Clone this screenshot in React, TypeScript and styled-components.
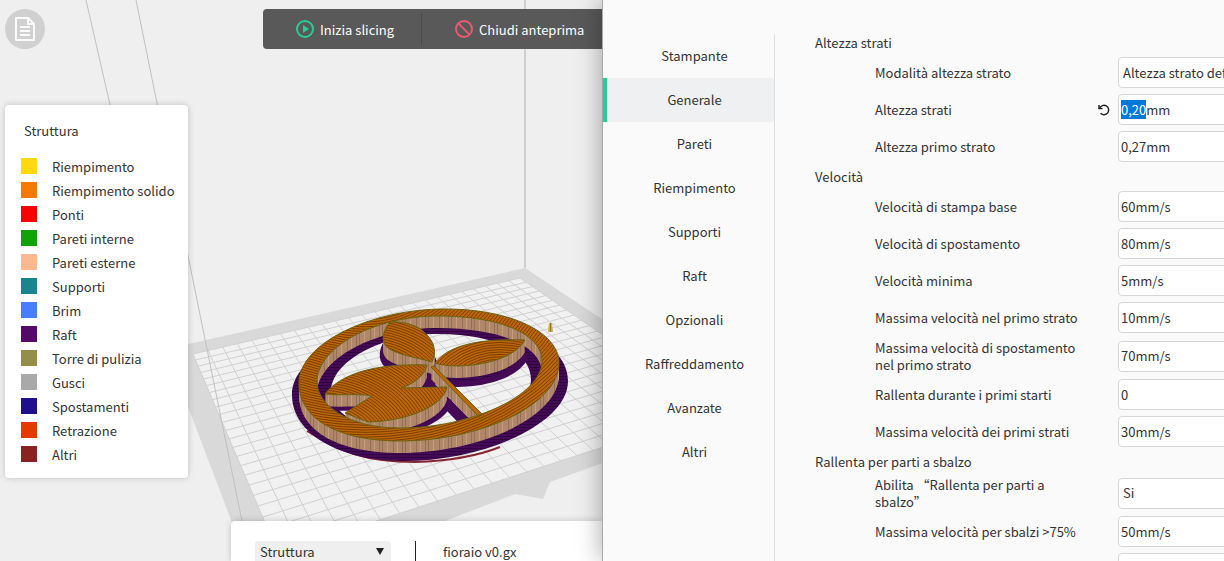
import React, { useEffect, useRef } from 'react';
import styled, { createGlobalStyle } from 'styled-components';

const GlobalStyle = createGlobalStyle`
  *, *::before, *::after { box-sizing: border-box; }
  body { margin: 0; background: #efefef; }
  body, button, input, select {
    font-family: 'Noto Sans CJK SC', 'Noto Sans', sans-serif;
    font-size: 13px;
    line-height: 17px;
    color: #333;
  }
  ::selection { background: #0078d7; color: #fff; }
`;

const Shell = styled.main`
  display: grid;
  grid-template-columns: minmax(0, 1fr) 622px;
  grid-template-rows: minmax(0, 1fr);
  height: 100vh;
  overflow: hidden;
`;

const Viewport = styled.section`
  position: relative;
  display: flex;
  flex-direction: column;
  overflow: hidden;
  background: #efefef;
`;

const SceneCanvas = styled.svg`
  position: absolute;
  inset: 0;
  width: 100%;
  height: 100%;
`;

const TopRow = styled.div`
  position: relative;
  display: flex;
  align-items: center;
  justify-content: space-between;
  padding: 9px 0 0 5px;
`;

const LogButton = styled.button`
  display: grid;
  place-items: center;
  flex: none;
  width: 40px;
  height: 40px;
  padding: 0;
  border: 0;
  border-radius: 50%;
  background: #d0d0d0;
`;

const Toolbar = styled.div`
  display: flex;
  flex: none;
  align-items: center;
  height: 40px;
  margin-right: -20px;
  border-radius: 4px;
  background: #595959;
`;

const ToolButton = styled.button<{ $width: number }>`
  display: flex;
  align-items: center;
  gap: 6px;
  width: ${(p) => p.$width}px;
  height: 32px;
  padding: 0 0 0 33px;
  border: 0;
  background: none;
  color: #fff;
  white-space: nowrap;

  & + & { border-left: 1px solid #484848; }
`;

const Legend = styled.aside`
  position: relative;
  width: 183px;
  margin: 56px 0 0 5px;
  padding: 17px 8px 12px 16px;
  border-radius: 4px;
  background: #fff;
  box-shadow: 0 0 6px rgba(0, 0, 0, 0.2);
`;

const LegendTitle = styled.h2`
  margin: 0 0 15px 3px;
  font-size: 13px;
  font-weight: 400;
  line-height: 17px;
`;

const LegendList = styled.ul`
  margin: 0;
  padding: 0;
  list-style: none;
`;

const LegendItem = styled.li`
  display: flex;
  align-items: center;
  gap: 15px;
  height: 24px;
  white-space: nowrap;
`;

const Swatch = styled.span<{ $color: string }>`
  flex: none;
  width: 16px;
  height: 16px;
  background: ${(p) => p.$color};
`;

const BottomBar = styled.footer`
  position: relative;
  display: flex;
  align-items: flex-start;
  height: 40px;
  margin: auto 0 0 231px;
  padding: 20px 0 0 24px;
  border-radius: 4px 0 0 0;
  background: #fff;
  box-shadow: 0 0 6px rgba(0, 0, 0, 0.2);
`;

const ViewPicker = styled.div`
  display: flex;
  align-items: center;
  flex: none;
  width: 136px;
  height: 20px;
  padding-right: 7px;
  border-radius: 3px 3px 0 0;
  background: #efefef;
`;

const ViewSelect = styled.select`
  flex: 1;
  height: 20px;
  padding: 0 5px;
  border: 0;
  appearance: none;
  background: none;
`;

const FileName = styled.span`
  display: flex;
  align-items: center;
  height: 20px;
  margin-left: 24px;
  padding-left: 27px;
  border-left: 1px solid #222;
`;

const Settings = styled.section`
  position: relative;
  display: flex;
  align-items: stretch;
  min-width: 0;
  min-height: 0;
  padding-top: 34px;
  overflow: hidden;
  background: #fafafa;
  box-shadow: 0 0 24px rgba(0, 0, 0, 0.35);
  border-left: 1px solid #a8a8a8;
`;

const Nav = styled.nav`
  flex: none;
  width: 172px;
  border-right: 1px solid #e0e0e0;
`;

const NavLink = styled.a<{ $active?: boolean }>`
  display: flex;
  align-items: center;
  justify-content: center;
  height: 44px;
  padding: 0 0 1px 8px;
  border-left: 4px solid ${(p) => (p.$active ? '#29cc96' : 'transparent')};
  background: ${(p) => (p.$active ? '#eef0f2' : 'transparent')};
  color: #333;
  text-decoration: none;
`;

const Form = styled.form`
  display: flex;
  flex: 1;
  flex-direction: column;
  gap: 6px;
  min-width: 0;
  padding-left: 40px;
`;

const Group = styled.fieldset`
  display: flex;
  flex-direction: column;
  gap: 6px;
  margin: 0;
  padding: 0;
  border: 0;
`;

const GroupTitle = styled.h3`
  margin: 0;
  font-size: 13px;
  font-weight: 400;
  line-height: 17px;
`;

const Row = styled.div`
  display: grid;
  grid-template-columns: 222px 21px 160px;
  align-items: center;
  min-height: 31px;
  padding-left: 60px;
`;

const FieldLabel = styled.label<{ $compact?: boolean }>`
  grid-column: 1;
  max-width: ${(p) => (p.$compact ? 180 : 206)}px;
`;

const ResetButton = styled.button`
  grid-column: 2;
  display: grid;
  width: 14px;
  height: 14px;
  padding: 0;
  border: 0;
  background: none;
`;

const TextField = styled.input`
  grid-column: 3;
  height: 31px;
  padding: 0 2px 1px;
  border: 1px solid #d6d6d6;
  border-radius: 4px;
  outline: none;
  background: #fff;
`;

const SelectField = styled.select`
  grid-column: 3;
  height: 31px;
  padding: 0 4px 1px;
  border: 1px solid #d6d6d6;
  border-radius: 4px;
  appearance: none;
  background: #fff;
`;

/* ---------- 3D preview ---------- */

type Point = [number, number];

// Corners of the build plate on screen: back left, back right, front right, front left.
const A: Point = [193, 354];
const B: Point = [520, 278];
const C: Point = [714, 411];
const D: Point = [278, 553];

const project = (u: number, v: number): Point => {
  const d1 = [B[0] - C[0], B[1] - C[1]];
  const d2 = [D[0] - C[0], D[1] - C[1]];
  const s = [A[0] - B[0] + C[0] - D[0], A[1] - B[1] + C[1] - D[1]];
  const det = d1[0] * d2[1] - d2[0] * d1[1];
  const g = (s[0] * d2[1] - d2[0] * s[1]) / det;
  const h = (d1[0] * s[1] - s[0] * d1[1]) / det;
  const w = 1 + g * u + h * v;
  const axis = (i: 0 | 1) =>
    (A[i] + (B[i] * (1 + g) - A[i]) * u + (D[i] * (1 + h) - A[i]) * v) / w;
  return [axis(0), axis(1)];
};

const COLS = 25;
const ROWS = 23;

const gridPath = () => {
  const parts: string[] = [];
  const add = (p: Point, q: Point) => parts.push(`M${p[0]} ${p[1]}L${q[0]} ${q[1]}`);
  for (let i = 0; i <= COLS; i++) add(project(i / COLS, 0), project(i / COLS, 1));
  for (let j = 0; j <= ROWS; j++) add(project(0, j / ROWS), project(1, j / ROWS));
  return parts.join('');
};

const RING =
  'M299 383C299 343 372 309 445 309C510 309 559 332 559 363C559 405 480 441 400 441C340 441 299 420 299 383Z' +
  'M317 382C317 403 345 428 400 428C470 428 542 396 542 361C542 334 500 316 438 316C375 316 317 347 317 382Z';
const PETAL_TOP =
  'M390 322C383 330 380 342 388 348C398 355 415 357 432 362C437 352 434 342 427 335C420 326 405 321 390 322Z';
const PETAL_RIGHT = 'M435 363C447 347 475 338 525 340C517 354 494 365 458 366C449 366 441 365 435 363Z';
const PETAL_LEFT =
  'M325 394C340 375 372 363 427 365C424 377 413 384 401 388L447 387C444 405 410 421 368 422L345 413L372 396C355 393 340 396 325 394Z';
const STEM = 'M431 367L434 366L486 418L482 420Z';

const WALL_HEIGHT = 12;
const steps = (from: number, to: number) =>
  Array.from({ length: from - to + 1 }, (_, i) => from - i);

const Rings = ({ cx, cy, ratio, count, step }: {
  cx: number; cy: number; ratio: number; count: number; step: number;
}) => (
  <g fill="none" stroke="#7a3f04" strokeWidth="1">
    {Array.from({ length: count }, (_, i) => (
      <ellipse key={i} cx={cx} cy={cy} rx={(i + 1) * step} ry={(i + 1) * step * ratio} />
    ))}
  </g>
);

const Scene = () => (
  <SceneCanvas viewBox="0 0 602 561" preserveAspectRatio="xMidYMid slice" aria-hidden="true">
    <defs>
      <pattern id="wall" width="23" height="40" patternUnits="userSpaceOnUse">
        <rect width="23" height="40" fill="#b08768" />
        <path d="M2.500 0V40M11.500 0V40M14.500 0V40" stroke="#94705a" strokeWidth="1" />
        <path d="M6.500 0V40M19.500 0V40" stroke="#c59c7e" strokeWidth="1" />
      </pattern>
      <pattern id="raft" width="3" height="3" patternUnits="userSpaceOnUse">
        <rect width="3" height="3" fill="#440a56" />
        <path d="M0 1.500H3" stroke="#2f053f" strokeWidth="1" />
      </pattern>
      <clipPath id="clipRing"><path d={RING} clipRule="evenodd" /></clipPath>
      <clipPath id="clipTop"><path d={PETAL_TOP} /></clipPath>
      <clipPath id="clipRight"><path d={PETAL_RIGHT} /></clipPath>
      <clipPath id="clipLeft"><path d={PETAL_LEFT} /></clipPath>
      <g id="solid">
        <path d={RING} fillRule="evenodd" />
        <path d={PETAL_TOP} />
        <path d={PETAL_RIGHT} />
        <path d={PETAL_LEFT} />
        <path d={STEM} />
      </g>
    </defs>

    <path d="M166 349L525 268L603 320L720 398V425L603 463L550 482L543 499L515 494L445 521L300 575H252Z" fill="#d9d9d9" />
    <path d={`M${A}L${B}L${C}L${D}Z`} fill="#f1f1f1" />
    <path d={gridPath()} fill="none" stroke="#d0d0d0" strokeWidth="1" />
    <path d="M86 0L166 349M136 0L244 531" fill="none" stroke="#c0c0c0" strokeWidth="1" />
    <path d="M525 0V268" fill="none" stroke="#cfcfcf" strokeWidth="2" />

    <path d="M307 431C340 452 365 462 415 462C450 461 480 455 500 447" fill="none" stroke="#862534" strokeWidth="2" />
    <path
      d="M292 395C292 355 360 322 445 322C520 322 568 345 568 381C568 425 480 462 400 461C340 460 292 434 292 395ZM331 392C331 410 355 431 405 431C465 431 531 410 531 380C531 352 495 334 438 334C380 334 331 362 331 392Z"
      fill="url(#raft)"
      fillRule="evenodd"
    />
    <g fill="url(#raft)" stroke="#440a56" strokeWidth="7" strokeLinejoin="round">
      <path d={PETAL_TOP} transform="translate(0 17)" />
      <path d={PETAL_RIGHT} transform="translate(0 18)" strokeWidth="6" />
      <path d={PETAL_LEFT} transform="translate(3 14)" strokeWidth="4" />
      <path d={STEM} transform="translate(-4 18)" />
    </g>

    <g fill="url(#wall)">
      {steps(WALL_HEIGHT, 1).map((dy) => (
        <g key={dy} transform={`translate(0 ${dy})`}>
          <path d={RING} fillRule="evenodd" />
          <path d={PETAL_TOP} />
          <path d={PETAL_RIGHT} />
          <path d={PETAL_LEFT} />
          <path d={STEM} />
        </g>
      ))}
    </g>

    <use href="#solid" fill="#bd6607" />
    <g clipPath="url(#clipRing)"><Rings cx={365} cy={250} ratio={0.8} count={92} step={3} /></g>
    <g clipPath="url(#clipTop)"><Rings cx={365} cy={400} ratio={0.8} count={40} step={3} /></g>
    <g clipPath="url(#clipRight)"><Rings cx={500} cy={400} ratio={0.8} count={40} step={3} /></g>
    <g clipPath="url(#clipLeft)"><Rings cx={320} cy={450} ratio={0.8} count={60} step={3} /></g>
    <use href="#solid" fill="none" stroke="#686410" strokeWidth="1" />

    <path d="M549 323H552L553 332H548Z" fill="#c9b044" />
    <path d="M550.500 323V332" stroke="#8f7c22" strokeWidth="1" />
  </SceneCanvas>
);

/* ---------- Icons ---------- */

const DocumentIcon = () => (
  <svg width="22" height="26" viewBox="0 0 22 26" fill="none" stroke="#fafafa" strokeWidth="2" aria-hidden="true">
    <path d="M2 2H14L20 8V24H2Z" strokeLinejoin="round" />
    <path d="M14 2V8H20M6 11H16M6 15H16M6 19H16" />
  </svg>
);

const PlayIcon = () => (
  <svg width="18" height="18" viewBox="0 0 18 18" aria-hidden="true">
    <circle cx="9" cy="9" r="8" fill="none" stroke="#29cc96" strokeWidth="2" />
    <path d="M7 5L13 9L7 13Z" fill="#29cc96" />
  </svg>
);

const BanIcon = () => (
  <svg width="18" height="18" viewBox="0 0 18 18" fill="none" stroke="#ea5a70" strokeWidth="2" aria-hidden="true">
    <circle cx="9" cy="9" r="8" />
    <path d="M3.400 3.400L14.600 14.600" />
  </svg>
);

const ResetIcon = () => (
  <svg width="14" height="14" viewBox="0 0 14 14" fill="none" stroke="#222" strokeWidth="1.500" aria-hidden="true">
    <path d="M2.600 5.300A4.700 4.700 0 1 1 3.600 10.300" />
    <path d="M2 2V5.500H5.500" />
  </svg>
);

/* ---------- Data ---------- */

const LEGEND: [string, string][] = [
  ['Riempimento', '#ffd90f'],
  ['Riempimento solido', '#f57800'],
  ['Ponti', '#f60000'],
  ['Pareti interne', '#10a305'],
  ['Pareti esterne', '#fab991'],
  ['Supporti', '#18868c'],
  ['Brim', '#467eff'],
  ['Raft', '#540a66'],
  ['Torre di pulizia', '#958e4a'],
  ['Gusci', '#a9a9a9'],
  ['Spostamenti', '#1e108c'],
  ['Retrazione', '#e43a00'],
  ['Altri', '#8a2222'],
];

const TABS = ['Stampante', 'Generale', 'Pareti', 'Riempimento', 'Supporti', 'Raft', 'Opzionali', 'Raffreddamento', 'Avanzate', 'Altri'];

type Field = { label: string; value: string; select?: boolean; changed?: boolean; compact?: boolean };

const GROUPS: { title: string; fields: Field[] }[] = [
  {
    title: 'Altezza strati',
    fields: [
      { label: 'Modalità altezza strato', value: 'Altezza strato definita', select: true },
      { label: 'Altezza strati', value: '0,20mm', changed: true },
      { label: 'Altezza primo strato', value: '0,27mm' },
    ],
  },
  {
    title: 'Velocità',
    fields: [
      { label: 'Velocità di stampa base', value: '60mm/s' },
      { label: 'Velocità di spostamento', value: '80mm/s' },
      { label: 'Velocità minima', value: '5mm/s' },
      { label: 'Massima velocità nel primo strato', value: '10mm/s' },
      { label: 'Massima velocità di spostamento nel primo strato', value: '70mm/s' },
      { label: 'Rallenta durante i primi starti', value: '0' },
      { label: 'Massima velocità dei primi strati', value: '30mm/s' },
    ],
  },
  {
    title: 'Rallenta per parti a sbalzo',
    fields: [
      { label: 'Abilita “Rallenta per parti a sbalzo”', value: 'Si', select: true, compact: true },
      { label: 'Massima velocità per sbalzi >75%', value: '50mm/s' },
      { label: '', value: '' },
    ],
  },
];

const SettingRow = ({ field, id }: { field: Field; id: string }) => {
  const input = useRef<HTMLInputElement>(null);

  useEffect(() => {
    if (field.changed && input.current) {
      input.current.focus({ preventScroll: true });
      input.current.setSelectionRange(0, 4);
    }
  }, [field.changed]);

  return (
    <Row>
      <FieldLabel htmlFor={id} $compact={field.compact}>{field.label}</FieldLabel>
      {field.changed && (
        <ResetButton type="button" aria-label="Ripristina"><ResetIcon /></ResetButton>
      )}
      {field.select ? (
        <SelectField id={id}><option>{field.value}</option></SelectField>
      ) : (
        <TextField id={id} ref={input} defaultValue={field.value} />
      )}
    </Row>
  );
};

export default function App() {
  return (
    <>
      <GlobalStyle />
      <Shell>
        <Viewport>
          <Scene />
          <TopRow>
            <LogButton type="button" aria-label="Registro"><DocumentIcon /></LogButton>
            <Toolbar>
              <ToolButton type="button" $width={158}><PlayIcon />Inizia slicing</ToolButton>
              <ToolButton type="button" $width={201}><BanIcon />Chiudi anteprima</ToolButton>
            </Toolbar>
          </TopRow>
          <Legend>
            <LegendTitle>Struttura</LegendTitle>
            <LegendList>
              {LEGEND.map(([name, color]) => (
                <LegendItem key={name}><Swatch $color={color} />{name}</LegendItem>
              ))}
            </LegendList>
          </Legend>
          <BottomBar>
            <ViewPicker>
              <ViewSelect aria-label="Vista"><option>Struttura</option></ViewSelect>
              <svg width="8" height="7" viewBox="0 0 8 7" aria-hidden="true"><path d="M0 0H8L4 7Z" fill="#222" /></svg>
            </ViewPicker>
            <FileName>fioraio v0.gx</FileName>
          </BottomBar>
        </Viewport>
        <Settings>
          <Nav>
            {TABS.map((tab) => (
              <NavLink key={tab} href="#" $active={tab === 'Generale'}>{tab}</NavLink>
            ))}
          </Nav>
          <Form>
            {GROUPS.map((group, g) => (
              <Group key={group.title} aria-label={group.title}>
                <GroupTitle>{group.title}</GroupTitle>
                {group.fields.map((field, f) => (
                  <SettingRow key={field.label} field={field} id={`field-${g}-${f}`} />
                ))}
              </Group>
            ))}
          </Form>
        </Settings>
      </Shell>
    </>
  );
}
